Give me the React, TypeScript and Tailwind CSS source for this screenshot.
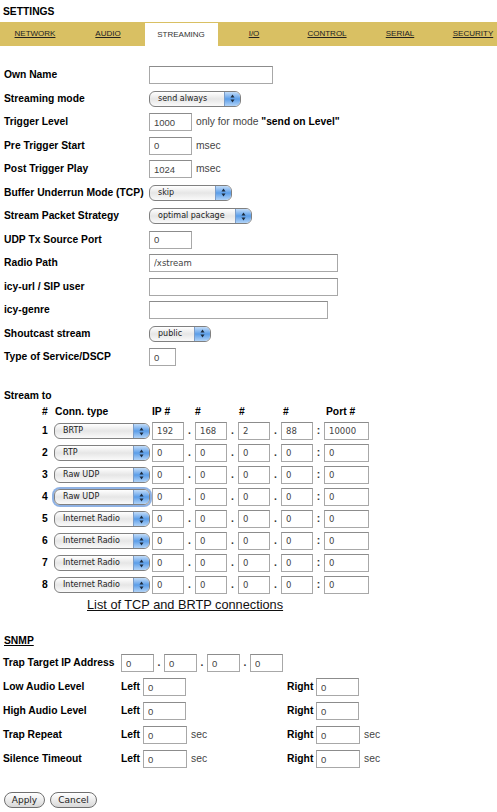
import React from 'react'

const tabs = ['NETWORK', 'AUDIO', 'STREAMING', 'I/O', 'CONTROL', 'SERIAL', 'SECURITY']

type Conn = { type: string; ip: string[]; port: string; focused?: boolean }

const streams: Conn[] = [
	{ type: 'BRTP', ip: ['192', '168', '2', '88'], port: '10000' },
	{ type: 'RTP', ip: ['0', '0', '0', '0'], port: '0' },
	{ type: 'Raw UDP', ip: ['0', '0', '0', '0'], port: '0' },
	{ type: 'Raw UDP', ip: ['0', '0', '0', '0'], port: '0', focused: true },
	{ type: 'Internet Radio', ip: ['0', '0', '0', '0'], port: '0' },
	{ type: 'Internet Radio', ip: ['0', '0', '0', '0'], port: '0' },
	{ type: 'Internet Radio', ip: ['0', '0', '0', '0'], port: '0' },
	{ type: 'Internet Radio', ip: ['0', '0', '0', '0'], port: '0' },
]

function Field({ value = '', className = '', mono = false }: { value?: string; className?: string; mono?: boolean }) {
	return (
		<input
			readOnly
			value={value}
			className={`h-[18px] border border-[#a8a8a8] border-t-[#8c8c8c] bg-white px-[4px] text-[#444] outline-none ${
				mono ? "font-['DejaVu_Sans',sans-serif] text-[8.5px]" : 'text-[9.5px]'
			} ${className}`}
		/>
	)
}

function Popup({ value, className = '', focused = false }: { value: string; className?: string; focused?: boolean }) {
	return (
		<div
			className={`flex h-[16px] items-stretch rounded-[6px] border border-[#808080] bg-gradient-to-b from-white via-[#e6e6e6] to-[#fafafa] ${
				focused ? 'shadow-[0_0_0_2px_#8fb2e4]' : ''
			} ${className}`}
		>
			<span className="flex flex-1 items-center pl-[8px] font-['DejaVu_Sans',sans-serif] text-[8px] leading-[14px] text-[#222]">{value}</span>
			<span className="flex w-[16px] items-center justify-center rounded-r-[5px] border-l border-[#7a9cc8] bg-gradient-to-b from-[#c2dcf8] via-[#5a9de8] to-[#b1d3f7]">
				<svg width="5" height="9" viewBox="0 0 5 9">
					<polygon points="2.5,0.5 4.5,3.5 0.5,3.5" fill="#1c2a3c" />
					<polygon points="0.5,5.5 4.5,5.5 2.5,8.5" fill="#1c2a3c" />
				</svg>
			</span>
		</div>
	)
}

function Row({ label, children }: { label: string; children?: React.ReactNode }) {
	return (
		<div className="flex h-[23.5px] items-center">
			<div className="w-[149px] shrink-0 pl-[4px] font-bold">{label}</div>
			<div className="flex items-center gap-[4px]">{children}</div>
		</div>
	)
}

function Sep({ ch, w = 'w-[11px]' }: { ch: string; w?: string }) {
	return <span className={`flex justify-center font-bold text-[#333] ${w}`}>{ch}</span>
}

function LeftRight({ label, sec = false }: { label: string; sec?: boolean }) {
	return (
		<div className="flex h-[24px] items-center">
			<div className="w-[121px] shrink-0 pl-[3px] font-bold">{label}</div>
			<div className="flex w-[166px] shrink-0 items-center">
				<span className="w-[22px] font-bold">Left</span>
				<Field value="0" className={sec ? 'w-[44px]' : 'w-[43px]'} />
				{sec && <span className="ml-[4px] text-[#444]">sec</span>}
			</div>
			<div className="flex items-center">
				<span className="w-[29px] font-bold">Right</span>
				<Field value="0" className={sec ? 'w-[44px]' : 'w-[43px]'} />
				{sec && <span className="ml-[4px] text-[#444]">sec</span>}
			</div>
		</div>
	)
}

export default function App() {
	return (
		<div className="h-[812px] w-[497px] overflow-hidden bg-white font-['Liberation_Sans',Arial,sans-serif] text-[10.3px] leading-[12px] text-black">
			{/* title */}
			<div className="h-[22px] pl-[3px] pt-[6px] font-bold">SETTINGS</div>

			{/* tab bar */}
			<div className="flex h-[24px] overflow-hidden bg-[#d9c063]">
				<div className="ml-[-1.5px] flex">
					{tabs.map(tab => (
						<div
							key={tab}
							className={`flex w-[73px] shrink-0 items-center justify-center text-[8px] ${
								tab === 'STREAMING' ? 'mt-[1px] bg-white text-[#333]' : 'text-[#222] underline'
							}`}
						>
							{tab}
						</div>
					))}
				</div>
			</div>

			{/* general settings */}
			<div className="pt-[17.25px]">
				<Row label="Own Name"><Field className="w-[124px]" /></Row>
				<Row label="Streaming mode"><Popup value="send always" className="w-[92px]" /></Row>
				<Row label="Trigger Level">
					<Field value="1000" className="w-[43px]" />
					<span className="text-[#444]">only for mode <b className="text-black">"send on Level"</b></span>
				</Row>
				<Row label="Pre Trigger Start">
					<Field value="0" className="w-[43px]" />
					<span className="text-[#444]">msec</span>
				</Row>
				<Row label="Post Trigger Play">
					<Field value="1024" className="w-[43px]" />
					<span className="text-[#444]">msec</span>
				</Row>
				<Row label="Buffer Underrun Mode (TCP)"><Popup value="skip" className="w-[83px]" /></Row>
				<Row label="Stream Packet Strategy"><Popup value="optimal package" className="w-[103px]" /></Row>
				<Row label="UDP Tx Source Port"><Field value="0" className="w-[43px]" /></Row>
				<Row label="Radio Path"><Field value="/xstream" className="w-[189px]" mono /></Row>
				<Row label="icy-url / SIP user"><Field className="w-[189px]" /></Row>
				<Row label="icy-genre"><Field className="w-[179px]" /></Row>
				<Row label="Shoutcast stream"><Popup value="public" className="w-[62px]" /></Row>
				<Row label="Type of Service/DSCP"><Field value="0" className="w-[27px]" /></Row>
			</div>

			{/* stream to */}
			<div className="mt-[20.25px] h-[14px] pl-[4px] font-bold leading-[14px]">Stream to</div>
			<div className="ml-[40px] mt-[1px]">
				<div className="flex h-[16px] items-center font-bold">
					<span className="w-[15px] pl-[2px]">#</span>
					<span className="w-[97px]">Conn. type</span>
					<span className="w-[43px]">IP #</span>
					<span className="w-[44px]">#</span>
					<span className="w-[44px]">#</span>
					<span className="w-[43px]">#</span>
					<span>Port #</span>
				</div>
				{streams.map((s, i) => (
					<div key={i} className="flex h-[22px] items-center">
						<span className="w-[14px] pl-[2px] font-bold">{i + 1}</span>
						<Popup value={s.type} focused={s.focused} className="w-[96px]" />
						<span className="w-[2px]" />
						{s.ip.map((part, j) => (
							<React.Fragment key={j}>
								<Field value={part} mono className="w-[32px]" />
								<Sep ch={j < 3 ? '.' : ':'} />
							</React.Fragment>
						))}
						<Field value={s.port} mono className="w-[45px]" />
					</div>
				))}
			</div>
			<div className="h-[18px] pl-[87px] text-[12.75px] leading-[18px] text-[#111] underline">
				List of TCP and BRTP connections
			</div>

			{/* snmp */}
			<div className="mt-[20px] h-[14px] pl-[4px] font-bold leading-[14px] underline">SNMP</div>
			<div className="mt-[3px]">
				<div className="flex h-[24px] items-center">
					<div className="w-[121px] shrink-0 pl-[3px] font-bold">Trap Target IP Address</div>
					{['0', '0', '0', '0'].map((part, j) => (
						<React.Fragment key={j}>
							<Field value={part} className="w-[33px]" />
							{j < 3 && <Sep ch="." w="w-[10px]" />}
						</React.Fragment>
					))}
				</div>
				<LeftRight label="Low Audio Level" />
				<LeftRight label="High Audio Level" />
				<LeftRight label="Trap Repeat" sec />
				<LeftRight label="Silence Timeout" sec />
			</div>

			{/* buttons */}
			<div className="mt-[20.5px] flex gap-[5px] pl-[4px]">
				{['Apply', 'Cancel'].map(b => (
					<button
						key={b}
						className={`h-[16px] rounded-full border border-[#6f6f6f] bg-gradient-to-b from-white via-[#ececec] to-[#d8d8d8] font-['DejaVu_Sans',sans-serif] text-[9px] text-[#222] ${
							b === 'Apply' ? 'w-[41px]' : 'w-[47px]'
						}`}
					>
						{b}
					</button>
				))}
			</div>
		</div>
	)
}
